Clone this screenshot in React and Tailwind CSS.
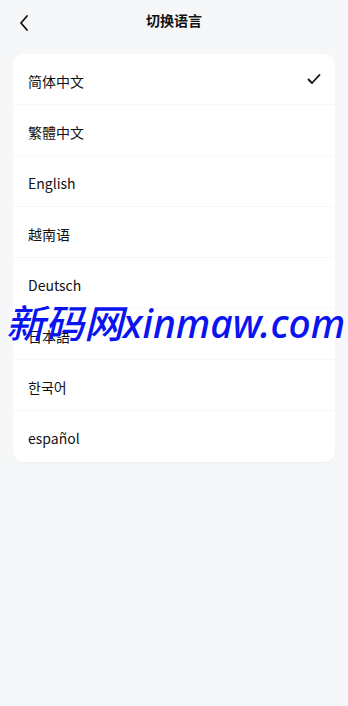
import { useState } from "react";

const LANGS = ["简体中文", "繁體中文", "English", "越南语", "Deutsch", "日本語", "한국어", "español"];

export default function App() {
  const [current, setCurrent] = useState("简体中文");

  return (
    <div
      className="relative min-h-[706px] bg-[#f6f7f9] text-[#111]"
      style={{ fontFamily: '"Noto Sans CJK SC", "Noto Sans", sans-serif' }}
    >
      {/* Header */}
      <header className="relative flex h-[41px] items-center justify-center">
        <button className="absolute left-[14px] top-[10px] p-1">
          <svg width="12" height="18" viewBox="0 0 12 18" fill="none">
            <path d="M9 2 L3 9 L9 16" stroke="#111" strokeWidth="1.8" strokeLinecap="round" strokeLinejoin="round" />
          </svg>
        </button>
        <h1 className="text-[14px] font-bold">切换语言</h1>
      </header>

      {/* Language list */}
      <div className="mx-[13px] mt-[13px] overflow-hidden rounded-[10px] bg-white shadow-[0_1px_2px_rgba(0,0,0,0.04)]">
        {LANGS.map((lang, i) => (
          <div
            key={lang}
            onClick={() => setCurrent(lang)}
            className={`flex h-[51px] items-center justify-between pl-[15px] pr-[14px] pt-[4px] text-[14px] ${
              i < LANGS.length - 1 ? "border-b border-[#f6f7f9]" : ""
            }`}
          >
            <span>{lang}</span>
            {current === lang && (
              <svg className="-mt-[4px]" width="14" height="12" viewBox="0 0 14 12" fill="none">
                <path d="M1.5 6.5 L5 10 L12.5 2" stroke="#111" strokeWidth="1.8" strokeLinecap="round" strokeLinejoin="round" />
              </svg>
            )}
          </div>
        ))}
      </div>

      {/* Watermark */}
      <div
        className="pointer-events-none absolute left-[6px] top-[297px] whitespace-nowrap text-[39px] font-medium italic leading-[52px] text-[#0a14f0]"
        style={{ fontFamily: '"Noto Sans", "Noto Sans CJK SC", sans-serif' }}
      >
        新码网xinmaw.com
      </div>
    </div>
  );
}
